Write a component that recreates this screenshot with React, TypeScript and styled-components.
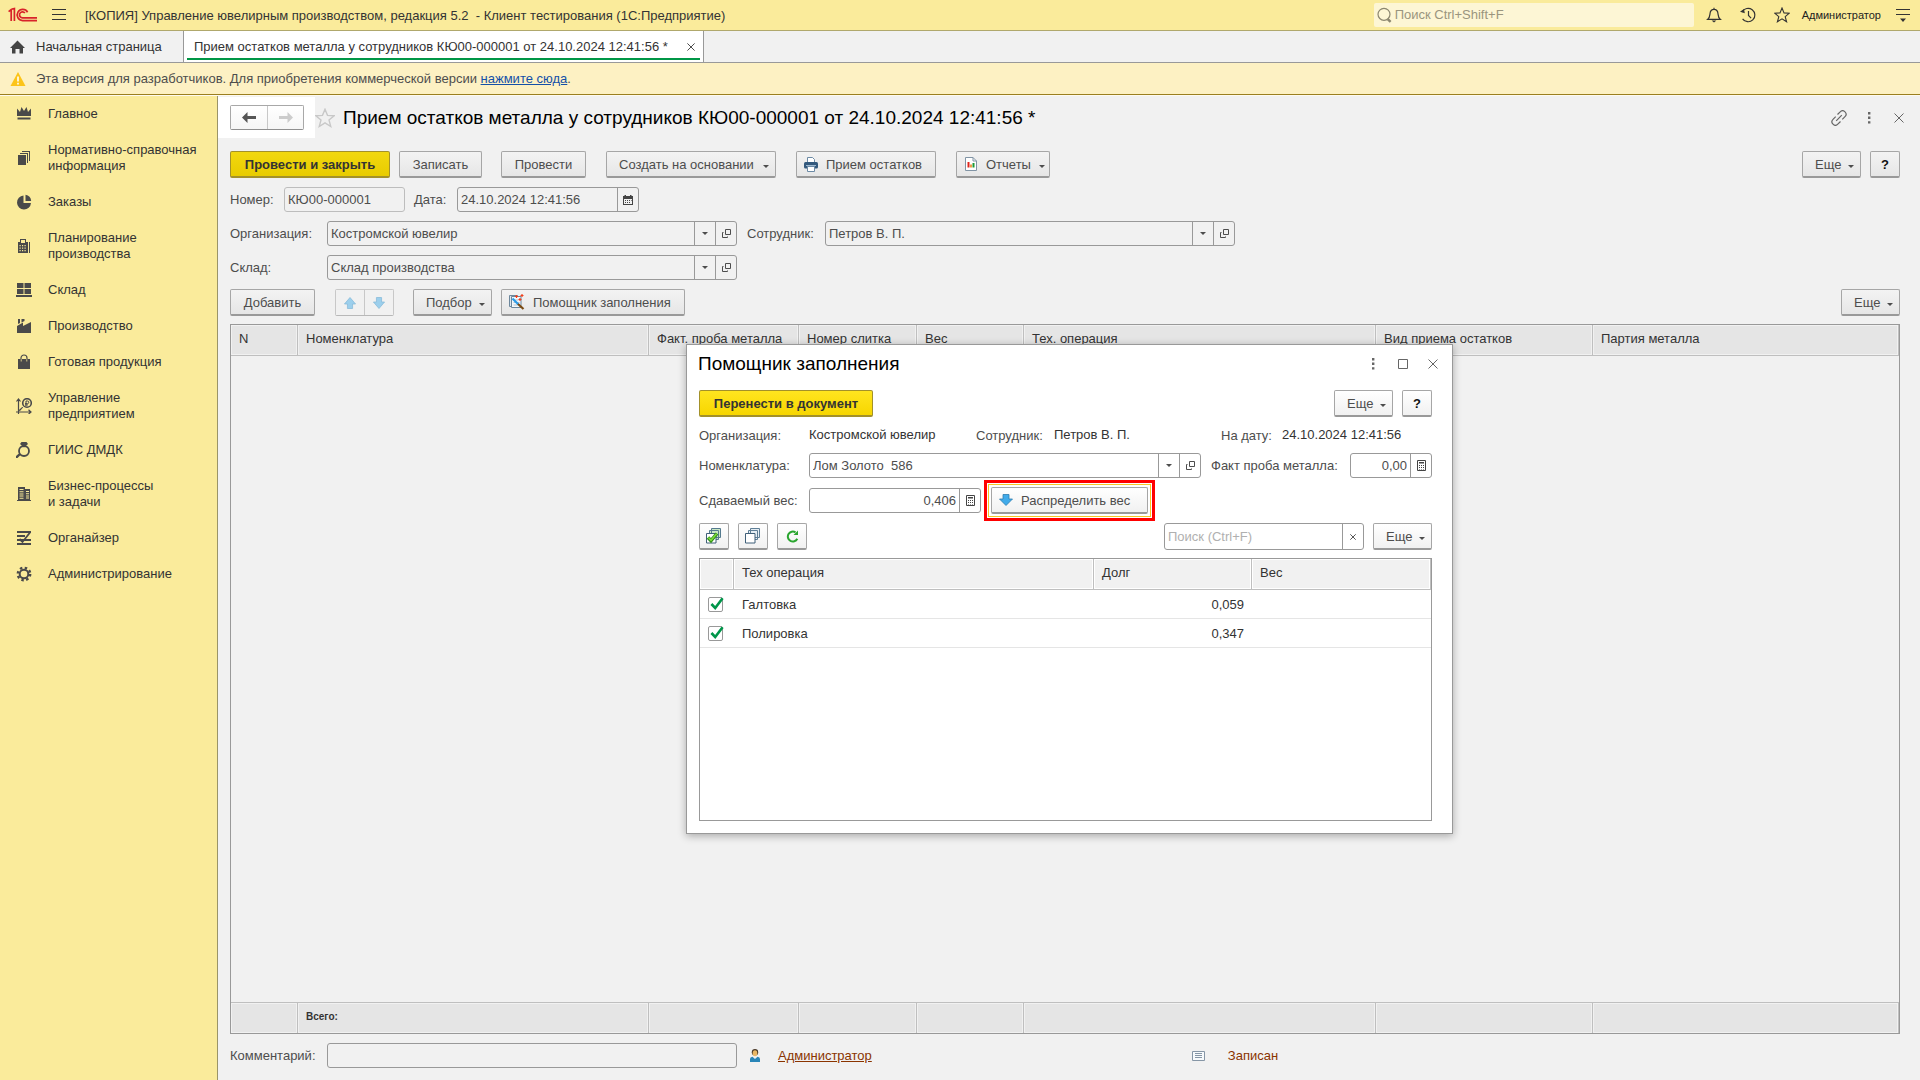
import React from "react";
import styled, { createGlobalStyle, css } from "styled-components";

const GlobalStyle = createGlobalStyle`
  * { box-sizing: border-box; }
  html, body { margin: 0; padding: 0; }
  body, button, input { font-family: "Liberation Sans", Arial, sans-serif; font-size: 13px; }
  body { color: #4d4d4d; background: #f1f1f1; }
  svg { display: block; flex: none; }
`;

/* ---------- Shell ---------- */

const Page = styled.div`
  min-height: 100vh;
  display: flex;
  flex-direction: column;
  overflow: hidden;
`;

const TopBar = styled.header`
  height: 31px;
  display: flex;
  align-items: center;
  background: #faeb9b;
  border-bottom: 1px solid #b0a86c;
  padding: 0 5px 0 8px;
  color: #333;
`;

const MenuButton = styled.button`
  width: 24px;
  height: 24px;
  margin-left: 10px;
  padding: 0;
  border: 0;
  background: none;
  display: flex;
  align-items: center;
  justify-content: center;
  color: #333;
`;

const AppTitle = styled.h1`
  margin: 0 auto 0 14px;
  font-size: 13px;
  font-weight: 400;
  white-space: pre;
`;

const GlobalSearch = styled.label`
  width: 320px;
  height: 24px;
  display: flex;
  align-items: center;
  gap: 3px;
  padding-left: 3px;
  border-radius: 2px;
  background: #fdf6d5;
  color: #8c8770;
`;

const GlobalSearchInput = styled.input`
  flex: 1;
  min-width: 0;
  padding: 0 0 1px;
  border: 0;
  outline: 0;
  background: none;
  &::placeholder { color: #9a957e; opacity: 1; }
`;

const TopIcons = styled.div`
  display: flex;
  align-items: center;
  gap: 10px;
  margin: 0 8px;
`;

const TopIconButton = styled(MenuButton)`
  margin: 0;
`;

const UserButton = styled.button`
  padding: 0;
  border: 0;
  background: none;
  font-size: 11px;
  color: #222;
`;

const TabBar = styled.nav`
  height: 32px;
  display: flex;
  background: #f1f1f1;
  border-bottom: 1px solid #999;
  color: #333;
`;

const HomeTab = styled.a`
  width: 184px;
  display: flex;
  align-items: center;
  gap: 11px;
  padding-left: 10px;
  border-right: 1px solid #999;
  color: #333;
  text-decoration: none;
`;

const OpenTab = styled.div`
  min-width: 520px;
  display: flex;
  align-items: center;
  justify-content: space-between;
  gap: 6px;
  padding: 0 6px 0 10px;
  background: #fff;
  border-right: 1px solid #999;
  box-shadow: inset 0 -2px 0 #fff, inset 3px 0 0 #fff, inset -3px 0 0 #fff, inset 0 -4px 0 #009646;
`;

const TabClose = styled.button`
  width: 12px;
  height: 16px;
  padding: 0;
  border: 0;
  background: none;
  display: flex;
  align-items: center;
  justify-content: center;
  color: #444;
`;

const Notice = styled.div`
  height: 32px;
  display: flex;
  align-items: center;
  gap: 10px;
  padding-left: 10px;
  background: #fdf1c3;
  border-bottom: 1px solid #9b7f1f;
  color: #4d4d4d;
  a { color: #1450a8; }
`;

const Body = styled.div`
  flex: 1;
  display: flex;
  border-top: 1px solid #fdfaf0;
`;

const Sidebar = styled.nav`
  width: 218px;
  flex: none;
  background: #faeb9b;
  border-right: 1px solid #9a9468;
`;

const SideLink = styled.a`
  display: flex;
  align-items: center;
  gap: 16px;
  padding: 10px 8px 10px 16px;
  line-height: 16px;
  color: #333;
  text-decoration: none;
  white-space: pre-line;
  svg { color: #4a4a4a; }
`;

const Main = styled.main`
  position: relative;
  flex: 1;
  min-width: 0;
  display: flex;
  flex-direction: column;
`;

const FormHeader = styled.div`
  display: flex;
  align-items: center;
  height: 41px;
  margin-top: 1px;
  padding-right: 6px;
`;

const NavCorner = styled.div`
  height: 41px;
  padding: 8px 11px 8px 12px;
  background: #fff;
`;

const Segmented = styled.div<{ $muted?: boolean }>`
  display: flex;
  border: 1px solid ${(p) => (p.$muted ? "#c8c8c8" : "#a8a8a8")};
  border-bottom-color: ${(p) => (p.$muted ? "#b8b8b8" : "#8f8f8f")};
  border-radius: 2px;
`;

const SegmentButton = styled.button<{ $w: number; $h: number; $plain?: boolean }>`
  width: ${(p) => p.$w}px;
  height: ${(p) => p.$h}px;
  padding: 0;
  border: 0;
  background: ${(p) => (p.$plain ? "#f1f1f1" : "linear-gradient(#fff, #f6f6f6)")};
  display: flex;
  align-items: center;
  justify-content: center;
  & + & { border-left: 1px solid ${(p) => (p.$plain ? "#c8c8c8" : "#a8a8a8")}; }
`;

const FormTitle = styled.h2`
  margin: 0 auto 0 8px;
  font-size: 19px;
  font-weight: 400;
  color: #000;
`;

const WindowButton = styled.button`
  width: 30px;
  height: 30px;
  padding: 0;
  border: 0;
  background: none;
  display: flex;
  align-items: center;
  justify-content: center;
  color: #666;
`;

const FormBody = styled.div`
  flex: 1;
  display: flex;
  flex-direction: column;
  padding: 13px 20px 12px 12px;
`;

const Fields = styled.div`
  display: flex;
  flex-direction: column;
  gap: 9px;
  margin-bottom: 8px;
`;

const Row = styled.div`
  display: flex;
  align-items: center;
`;

const CommentRow = styled(Row)`
  margin-top: 9px;
`;

const Spacer = styled.div`
  flex: 1;
`;

const Gap = styled.div<{ $w: number }>`
  width: ${(p) => p.$w}px;
  flex: none;
`;

const Caret = styled.span`
  width: 0;
  height: 0;
  margin-top: 4px;
  border: 3px solid transparent;
  border-top-color: #4d4d4d;
  border-bottom: 0;
`;

const Button = styled.button<{ $w?: number; $primary?: boolean; $light?: boolean; $icon?: boolean; $menu?: boolean }>`
  width: ${(p) => p.$w}px;
  height: 27px;
  flex: none;
  display: flex;
  align-items: center;
  justify-content: center;
  padding: 0;
  border: 1px solid #a6a6a6;
  border-bottom: 2px solid #999;
  border-radius: 2px;
  background: ${(p) => (p.$light ? "linear-gradient(#fff, #f1f1f1)" : "linear-gradient(#f3f3f3, #e6e6e6)")};
  color: #4d4d4d;
  white-space: nowrap;
  ${(p) =>
    p.$menu &&
    css`
      justify-content: flex-start;
      padding: 0 6px 0 12px;
      ${Caret} { margin-left: auto; }
    `}
  ${(p) =>
    p.$icon &&
    css`
      justify-content: flex-start;
      padding-left: 7px;
      gap: 8px;
    `}
  ${(p) =>
    p.$primary &&
    css`
      font-weight: 700;
      color: #333;
      border-color: #a3912a;
      background: ${p.$light ? "linear-gradient(#ffe51f, #f7d600)" : "linear-gradient(#f2d80f, #e8cc00)"};
    `}
`;

const HelpButton = styled(Button)`
  font-weight: 700;
  color: #111;
`;

const Label = styled.label<{ $w?: number }>`
  width: ${(p) => p.$w}px;
  flex: none;
  white-space: nowrap;
`;

const FieldBox = styled.div<{ $w: number; $light?: boolean; $readonly?: boolean; $h?: number }>`
  width: ${(p) => p.$w}px;
  height: ${(p) => p.$h ?? 25}px;
  flex: none;
  display: flex;
  border: 1px solid ${(p) => (p.$readonly ? "#bdbdbd" : "#999")};
  border-radius: 3px;
  background: ${(p) => (p.$light ? "#fff" : "#f1f1f1")};
`;

const FieldInput = styled.input<{ $right?: boolean }>`
  flex: 1;
  min-width: 0;
  padding: 0 3px;
  border: 0;
  outline: 0;
  background: none;
  color: #4d4d4d;
  text-align: ${(p) => (p.$right ? "right" : "left")};
  &::placeholder { color: #b0b0b0; opacity: 1; }
`;

const FieldButton = styled.button`
  width: 21px;
  padding: 0;
  border: 0;
  border-left: 1px solid #999;
  background: none;
  display: flex;
  align-items: center;
  justify-content: center;
  color: #4d4d4d;
`;

const FieldCaret = styled(Caret)`
  margin-top: 0;
`;

/* ---------- Tables ---------- */

const TableFrame = styled.div`
  flex: 1;
  display: flex;
  border: 1px solid #999;
`;

const DialogTableFrame = styled(TableFrame)`
  align-items: flex-start;
`;

const Grid = styled.table<{ $light?: boolean }>`
  width: 100%;
  table-layout: fixed;
  border-collapse: separate;
  border-spacing: 0;
  color: #333;
  th, td { padding: 0 8px; text-align: left; font-weight: 400; white-space: nowrap; overflow: hidden; }
  thead th, tfoot td {
    height: 31px;
    padding-bottom: 3px;
    background: ${(p) => (p.$light ? "#f1f1f1" : "#e5e5e5")};
    box-shadow: inset 0 0 0 1px ${(p) => (p.$light ? "#fff" : "#f1f1f1")};
    border-right: 1px solid #bfbfbf;
  }
  thead th { border-bottom: 1px solid #bfbfbf; }
  tfoot td { border-top: 1px solid #bfbfbf; font-size: 10px; font-weight: 700; }
`;

const DataCell = styled.td<{ $right?: boolean }>`
  height: 29px;
  border-bottom: 1px solid #e5e5e5;
  && { text-align: ${(p) => (p.$right ? "right" : "left")}; }
`;

const CheckLabel = styled.label`
  display: block;
  width: 17px;
  height: 17px;
  position: relative;
  svg { position: absolute; left: 1px; top: 0; }
`;

const CheckInput = styled.input`
  appearance: none;
  display: block;
  width: 15px;
  height: 15px;
  margin: 2px 0 0;
  border: 1px solid #999;
  border-radius: 2px;
  background: #fff;
`;

const FooterLink = styled.a`
  color: #8a3400;
`;

const StatusText = styled.span`
  color: #8a3400;
`;

/* ---------- Dialog ---------- */

const Dialog = styled.section`
  position: absolute;
  left: 468px;
  top: 248px;
  width: 767px;
  height: 490px;
  display: flex;
  flex-direction: column;
  padding: 0 20px 12px 12px;
  background: #fff;
  border: 1px solid #999;
  box-shadow: 0 2px 8px rgba(0, 0, 0, 0.3);
`;

const DialogHeader = styled.div`
  display: flex;
  align-items: center;
  height: 38px;
  margin: 0 -16px 7px 0;
`;

const DialogTitle = styled(FormTitle)`
  margin-left: -1px;
`;

const DialogRows = styled.div`
  display: flex;
  flex-direction: column;
  gap: 9px;
  margin-bottom: 10px;
`;

const StaticValue = styled.output<{ $w?: number }>`
  width: ${(p) => p.$w}px;
  color: #333;
  line-height: 18px;
`;

const Highlight = styled.div`
  position: relative;
  margin: -1px 0 -1px 10px;
  &::before {
    content: "";
    position: absolute;
    inset: -7px;
    border: 3px solid #f00;
    pointer-events: none;
  }
  &::after {
    content: "";
    position: absolute;
    inset: -3px;
    border: 1px solid #f5c827;
    pointer-events: none;
  }
`;

/* ---------- Icons ---------- */

const Logo = () => (
  <svg width="29" height="16" viewBox="0 0 29 16" fill="none" stroke="#d8232a" strokeWidth="1.7">
    <path d="M.6 4.600 4 2M3.200 3v11M6.400 14V1.600L4 2" />
    <path d="M19.600 5.200A5.600 5.600 0 1 0 14.600 13.600H29" />
    <path d="M16.900 6A3 3 0 1 0 14.600 10.800H29" />
  </svg>
);
const Burger = () => (
  <svg width="16" height="12" viewBox="0 0 16 12" fill="currentColor">
    <path d="M1 0h14v1H1zM1 5h14v1H1zM1 10h14v1H1z" />
  </svg>
);
const SearchIcon = () => (
  <svg width="15" height="16" viewBox="0 0 15 16" fill="none" stroke="currentColor" strokeWidth="1.2">
    <circle cx="7" cy="7.3" r="6" />
    <path d="m10.6 12 3 2.8" strokeWidth="2.4" />
  </svg>
);
const Bell = () => (
  <svg width="16" height="16" viewBox="0 0 16 16" fill="none" stroke="currentColor" strokeWidth="1.2">
    <path d="M1.6 12.4c2.2-1.8 2.2-3 2.4-5.600C4.200 4 5.600 2.400 8 2.400S11.800 4 12 6.800c.2 2.600.2 3.800 2.400 5.600zM8 2.400V.8" />
    <path d="M5.600 13.600h4.800L8 15.600z" fill="currentColor" stroke="none" />
  </svg>
);
const History = () => (
  <svg width="16" height="16" viewBox="0 0 16 16" fill="none" stroke="currentColor" strokeWidth="1.2">
    <path d="M2.200 5A6.700 6.700 0 1 1 2.600 11.800M8.500 4v4.500l2.600 2.600" />
    <path d="M0 4.800 4.800 6.200 4 2z" fill="currentColor" stroke="none" />
  </svg>
);
const Star = ({ size = 16, color = "currentColor" }: { size?: number; color?: string }) => (
  <svg width={size} height={size} viewBox="0 0 16 16" fill="none" stroke={color} strokeWidth="1.1">
    <path d="m8 1 2 4.900 5.300.3-4.100 3.400 1.400 5.200L8 11.900l-4.600 2.900 1.400-5.200L.7 6.200 6 5.900z" />
  </svg>
);
const PanelMenu = () => (
  <svg width="14" height="14" viewBox="0 0 14 14" fill="currentColor">
    <path d="M0 1h14v1H0zM0 6h14v1H0zM4 10.500h6L7 14z" />
  </svg>
);
const Home = () => (
  <svg width="15" height="14" viewBox="0 0 15 14" fill="#444">
    <path d="M7.500.5 15 8h-2v5.500H9.500V9h-4v4.500H2V8H0z" />
  </svg>
);
const Cross = ({ size = 8, w = 1.2 }: { size?: number; w?: number }) => (
  <svg width={size} height={size} viewBox="0 0 10 10" stroke="currentColor" strokeWidth={w}>
    <path d="m.5.5 9 9m0-9-9 9" />
  </svg>
);
const Warning = () => (
  <svg width="16" height="14" viewBox="0 0 16 14">
    <path d="M8 0 15.500 14H.5z" fill="#fcc419" />
    <path d="M7.200 4.500h1.600v5H7.200zM7.200 10.800h1.600v1.600H7.200z" fill="#fff" />
  </svg>
);
const Arrow = ({ color, flip }: { color: string; flip?: boolean }) => (
  <svg width="14" height="11" viewBox="0 0 14 11" fill={color}>
    <path d={flip ? "M14 5.500 8.500 0v4H0v3h8.500v4z" : "M0 5.500 5.500 0v4H14v3H5.500v4z"} />
  </svg>
);
const LinkIcon = () => (
  <svg width="16" height="16" viewBox="0 0 16 16" fill="none" stroke="currentColor" strokeWidth="1.2">
    <path d="m6.500 4.500 2.700-2.700a3.200 3.200 0 0 1 4.800 4.800L11.300 9.300M9.500 11.500l-2.700 2.700A3.200 3.200 0 0 1 2 9.400l2.700-2.700M5.200 10.800l5.600-5.600" />
  </svg>
);
const Dots = () => (
  <svg width="4" height="12" viewBox="0 0 4 12" fill="currentColor">
    <path d="M1 0h2.400v2.400H1zM1 4.600h2.400V7H1zM1 9.200h2.400v2.400H1z" />
  </svg>
);
const Square = () => (
  <svg width="10" height="10" viewBox="0 0 10 10" fill="none" stroke="currentColor">
    <path d="M.5.5h9v9h-9z" />
  </svg>
);
const OpenIcon = () => (
  <svg width="9" height="9" viewBox="0 0 9 9" fill="none" stroke="currentColor">
    <path d="M3.500.5h5v5h-5zM1.500 3.500h-1v5h5v-1" />
  </svg>
);
const Calendar = () => (
  <svg width="10" height="10" viewBox="0 0 10 10">
    <path d="M0 1h1.500V0h1.500v1h4V0h1.500v1H10v9H0z" fill="#444" />
    <path d="M1 4h8v5H1z" fill="#f1f1f1" />
    <path d="M2 5h1v1H2zM4 5h1v1H4zM6 5h1v1H6zM2 7h1v1H2zM4 7h1v1H4zM6 7h1v1H6zM8 5h.6v1H8z" fill="#444" />
  </svg>
);
const Calculator = () => (
  <svg width="9" height="11" viewBox="0 0 9 11">
    <path d="M.5.5h8v10h-8z" fill="none" stroke="#444" />
    <path d="M2 2h5v1.500H2zM2 5h1v1H2zM4 5h1v1H4zM6 5h1v1H6zM2 7h1v1H2zM4 7h1v1H4zM6 7h1v1H6zM2 9h1v.6H2zM4 9h1v.6H4zM6 9h1v.6H6z" fill="#444" />
  </svg>
);
const BlueArrow = ({ down, pale, wide }: { down?: boolean; pale?: boolean; wide?: boolean }) => (
  <svg
    width={wide ? 14 : 12}
    height="12"
    viewBox="0 0 14 12"
    preserveAspectRatio="none"
    fill={pale ? "#9ccfec" : "#41abea"}
    stroke={pale ? "#86b9d8" : "#2f7eb0"}
    strokeWidth=".8"
  >
    <path d={down ? "M4 .5h6V5h3.500L7 11.500.5 5H4z" : "M4 11.500h6V7h3.500L7 .5.5 7H4z"} />
  </svg>
);
const Printer = () => (
  <svg width="14" height="15" viewBox="0 0 14 15">
    <path d="M3.500.5h5l2 2v4h-7z" fill="#fff" stroke="#6c8aa5" />
    <rect x="0" y="5" width="14" height="6.500" rx="1.500" fill="#33597d" />
    <path d="M2 8h10v1H2z" fill="#9fb9d0" />
    <path d="M3.500 9.500h7v5h-7z" fill="#fff" stroke="#6c8aa5" />
  </svg>
);
const Report = () => (
  <svg width="14" height="14" viewBox="-1 0 14 14">
    <path d="M.5.5h7.500l3.500 3.500v9.500H.5z" fill="#fff" stroke="#8194a5" />
    <path d="M8 .5V4h3.500" fill="none" stroke="#8194a5" />
    <path d="M2.500 5h2v5.500h-2z" fill="#e0261c" />
    <path d="M5.200 7.500h1.600v3H5.200z" fill="#e8801c" />
    <path d="M7.500 6h2v4.500h-2z" fill="#1d9a35" />
  </svg>
);
const Wizard = () => (
  <svg width="16" height="16" viewBox="0 0 16 16">
    <path d="M.5 1.500h8v11h-8z" fill="#dfe8ef" stroke="#6d879c" />
    <path d="M2.500 2.500h9.500v11H2.500z" fill="#f4f8fb" stroke="#6d879c" />
    <path d="M4.500 6h5M4.500 8.500h6M4.500 11h4" stroke="#b3c3d0" />
    <path d="m3.500 4.500 6 6" stroke="#2b9be8" strokeWidth="2.200" />
    <path d="m9 10 5.500 5" stroke="#7a4a12" strokeWidth="2.200" />
    <path d="M7.500 1v3M6 2.500h3M13 0v3M11.500 1.500h3M11 4v3M9.500 5.500h3" stroke="#f0401c" strokeWidth="1.200" />
  </svg>
);
const CheckAll = () => (
  <svg width="16" height="16" viewBox="0 0 16 16">
    <path d="M5.500.5h9v9h-9zM3.500 2.500h9v9h-9z" fill="#c9e7c4" stroke="#547a8f" />
    <path d="M.5 5.500h9.500v9.500H.5z" fill="#fff" stroke="#3f5f78" />
    <path d="m2 9.500 3 3.200 6-7.200" fill="none" stroke="#2f8f18" strokeWidth="3.400" />
    <path d="m2.400 9.500 2.600 2.800 5.600-6.600" fill="none" stroke="#7ddc3c" strokeWidth="1.600" />
  </svg>
);
const UncheckAll = () => (
  <svg width="16" height="16" viewBox="0 0 16 16" fill="#e6eef4" stroke="#5f7f97">
    <path d="M5.500.5h9v9h-9zM3.500 2.500h9v9h-9z" />
    <path d="M.5 5.500h9.500v9.500H.5z" fill="#fff" stroke="#3f5f78" />
  </svg>
);
const Refresh = () => (
  <svg width="13" height="13" viewBox="0 0 13 13" fill="none" stroke="#2aa52f" strokeWidth="2">
    <path d="M9.500 2.300A5 5 0 1 0 11.300 8.800" />
    <path d="M12 .5V5H7.500z" fill="#2aa52f" stroke="none" />
  </svg>
);
const Check = () => (
  <svg width="15" height="14" viewBox="0 0 15 14" fill="none" stroke="#00964a" strokeWidth="2.600">
    <path d="m2.400 7 3.800 4 7.400-9.800" />
  </svg>
);
const Person = () => (
  <svg width="10" height="13" viewBox="0 0 10 13">
    <circle cx="5" cy="3.200" r="3.200" fill="#4b3a28" />
    <ellipse cx="5" cy="4.200" rx="2.300" ry="3" fill="#eab765" />
    <path d="M0 13V10q0-2 2.500-2.200L5 10l2.500-2.200Q10 8 10 10v3z" fill="#2a86b8" />
  </svg>
);
const Doc = () => (
  <svg width="13" height="10" viewBox="0 0 13 10" fill="none" stroke="#8696a6">
    <path d="M.5.500h12v9H.5z" fill="#f7fafc" />
    <path d="M3 2.500h7M3 4.500h7M3 6.500h7" />
  </svg>
);

const sideIcons: Record<string, React.ReactNode> = {
  crown: <path d="M1 2.500 4 6l1.500-5L8 5l2.500-4L12 6l3-3.500V10H1zM1.500 11.500h13V13.500h-13z" />,
  books: <path d="M2 5h8v10H2zM4 3h8v10h-1V4H4zM6 1h8v10h-1V2H6z" />,
  pie: <path d="M7.500 1.500V9H15A7 7 0 1 1 7.500 1.500zM9.500.8A7 7 0 0 1 15.200 7H9.500z" />,
  calc: (
    <path
      fillRule="evenodd"
      d="M4 1h6v3h2v11H2V4h2zM5 2v3h4V2zM3.500 7v1.200h1.200V7zm2.500 0v1.200h1.200V7zm2.500 0v1.200h1.200V7zM3.500 9.500v1.200h1.200V9.500zm2.500 0v1.200h1.200V9.500zm2.500 0v1.200h1.200V9.500zM3.500 12v1.200h1.200V12zM6 12v1.200h1.200V12zm2.500 0v1.200h1.200V12zM13 4h1v11h-1z"
    />
  ),
  store: <path d="M1 1h6.500v5H1zM8.500 1H15v5H8.500zM1 7h6.500v5H1zM8.500 7H15v5H8.500zM0 13h16v2H0z" />,
  factory: <path d="M2 1h2v4l-2 1zM5.500 1h3v2l-3 1.500zM1 8l6-3.500V8l8-4v11H1z" />,
  bag: (
    <g>
      <path d="M2 5h12v10H2z" />
      <path d="M5 8V4a3 3 0 0 1 6 0v4" fill="none" stroke="currentColor" strokeWidth="1.200" />
      <path d="M5.200 5.200v2.300M10.800 5.200v2.300" stroke="#faeb9b" strokeWidth=".8" />
    </g>
  ),
  enterprise: (
    <g fill="none" stroke="currentColor" strokeWidth="1.200">
      <path d="M2.500 16V1.500M0 14h15M.5 3.500l2-2.500 2 2.500M12.500 11.800 15 14l-2.500 2.200M2.500 12.500c3 0 2-3 4.500-3" />
      <circle cx="11" cy="5" r="4.300" strokeWidth="1.600" />
      <path d="M10 8V3h1.500a1.200 1.200 0 0 1 0 2.600H9M9 6.900h3" strokeWidth="1" />
    </g>
  ),
  ring: (
    <g>
      <circle cx="8" cy="9" r="5" fill="none" stroke="currentColor" strokeWidth="1.800" />
      <path d="M5.500 0h5L12 2 8 5.500 4 2zM0 14l3.500-3 1.500 1.500L1.500 16H0z" />
    </g>
  ),
  buildings: (
    <path
      fillRule="evenodd"
      d="M2 1h7v2h5v11h1v1H1v-1h1zM3.500 3v1h4V3zm0 2.200v1h4v-1zm0 2.200v1h4v-1zm0 2.200v1h4v-1zm0 2.200v1h4v-1zM10 5v1h3V5zm0 2.200v1h3v-1zm0 2.200v1h3v-1zm0 2.200v1h3v-1z"
    />
  ),
  organizer: (
    <g>
      <path d="M1 1h14v2H1zM1 5h8v2H1zM1 9h14v2H1zM1 13h14v2H1z" />
      <path d="m3.500 9 3 3L14 2.500" fill="none" stroke="#4a4a4a" strokeWidth="1.800" />
    </g>
  ),
  gear: (
    <g fill="none" stroke="currentColor">
      <circle cx="8" cy="8" r="4.300" strokeWidth="2" />
      <circle cx="8" cy="8" r="6.200" strokeWidth="2.400" strokeDasharray="2.435 2.435" />
    </g>
  ),
};

const sections: [string, string][] = [
  ["crown", "Главное"],
  ["books", "Нормативно-справочная\nинформация"],
  ["pie", "Заказы"],
  ["calc", "Планирование\nпроизводства"],
  ["store", "Склад"],
  ["factory", "Производство"],
  ["bag", "Готовая продукция"],
  ["enterprise", "Управление\nпредприятием"],
  ["ring", "ГИИС ДМДК"],
  ["buildings", "Бизнес-процессы\nи задачи"],
  ["organizer", "Органайзер"],
  ["gear", "Администрирование"],
];

const columns: [string, number | undefined][] = [
  ["N", 67],
  ["Номенклатура", 351],
  ["Факт. проба металла", 150],
  ["Номер слитка", 118],
  ["Вес", 107],
  ["Тех. операция", 352],
  ["Вид приема остатков", 217],
  ["Партия металла", undefined],
];

const operations = [
  { name: "Галтовка", debt: "0,059" },
  { name: "Полировка", debt: "0,347" },
];

const MoreButton = ({ light }: { light?: boolean }) => (
  <Button $w={59} $light={light} $menu>
    Еще <Caret />
  </Button>
);

type FieldProps = {
  id: string;
  value: string;
  width: number;
  light?: boolean;
  readOnly?: boolean;
  right?: boolean;
  kind?: "ref" | "date" | "calc";
};

const Field = ({ id, value, width, light, readOnly, right, kind }: FieldProps) => (
  <FieldBox $w={width} $light={light} $readonly={readOnly}>
    <FieldInput id={id} defaultValue={value} readOnly={readOnly} $right={right} />
    {kind === "ref" && (
      <>
        <FieldButton aria-label="Выбрать из списка"><FieldCaret /></FieldButton>
        <FieldButton aria-label="Открыть"><OpenIcon /></FieldButton>
      </>
    )}
    {kind === "date" && <FieldButton aria-label="Календарь"><Calendar /></FieldButton>}
    {kind === "calc" && <FieldButton aria-label="Калькулятор"><Calculator /></FieldButton>}
  </FieldBox>
);

const FillAssistant = () => (
  <Dialog role="dialog" aria-label="Помощник заполнения">
    <DialogHeader>
      <DialogTitle>Помощник заполнения</DialogTitle>
      <WindowButton aria-label="Меню"><Dots /></WindowButton>
      <WindowButton aria-label="Развернуть"><Square /></WindowButton>
      <WindowButton aria-label="Закрыть"><Cross size={10} w={1} /></WindowButton>
    </DialogHeader>
    <DialogRows>
      <Row>
        <Button $w={174} $primary $light>Перенести в документ</Button>
        <Spacer />
        <MoreButton light />
        <Gap $w={9} />
        <HelpButton $w={30} $light>?</HelpButton>
      </Row>
      <Row>
        <Label $w={110} htmlFor="d-org">Организация:</Label>
        <StaticValue $w={167} id="d-org">Костромской ювелир</StaticValue>
        <Label $w={78} htmlFor="d-emp">Сотрудник:</Label>
        <StaticValue $w={167} id="d-emp">Петров В. П.</StaticValue>
        <Label $w={61} htmlFor="d-date">На дату:</Label>
        <StaticValue id="d-date">24.10.2024 12:41:56</StaticValue>
      </Row>
      <Row>
        <Label $w={110} htmlFor="d-item">Номенклатура:</Label>
        <Field id="d-item" value="Лом Золото  586" width={392} light kind="ref" />
        <Spacer />
        <Label $w={139} htmlFor="d-probe">Факт проба металла:</Label>
        <Field id="d-probe" value="0,00" width={82} light right kind="calc" />
      </Row>
    </DialogRows>
    <DialogRows>
      <Row>
        <Label $w={110} htmlFor="d-weight">Сдаваемый вес:</Label>
        <Field id="d-weight" value="0,406" width={172} light right kind="calc" />
        <Highlight>
          <Button $w={157} $light $icon><BlueArrow down wide />Распределить вес</Button>
        </Highlight>
      </Row>
    </DialogRows>
    <Fields>
      <Row>
        <Button $w={30} $light aria-label="Отметить все"><CheckAll /></Button>
        <Gap $w={9} />
        <Button $w={30} $light aria-label="Снять отметки"><UncheckAll /></Button>
        <Gap $w={9} />
        <Button $w={30} $light aria-label="Обновить"><Refresh /></Button>
        <Spacer />
        <FieldBox $w={200} $h={27} $light>
          <FieldInput placeholder="Поиск (Ctrl+F)" aria-label="Поиск" />
          <FieldButton aria-label="Очистить"><Cross size={6} w={1.6} /></FieldButton>
        </FieldBox>
        <Gap $w={9} />
        <MoreButton light />
      </Row>
    </Fields>
    <DialogTableFrame>
      <Grid $light>
        <colgroup>
          <col width="34" /><col width="360" /><col width="158" /><col />
        </colgroup>
        <thead>
          <tr><th /><th>Тех операция</th><th>Долг</th><th>Вес</th></tr>
        </thead>
        <tbody>
          {operations.map((op) => (
            <tr key={op.name}>
              <DataCell>
                <CheckLabel>
                  <CheckInput type="checkbox" defaultChecked aria-label={op.name} />
                  <Check />
                </CheckLabel>
              </DataCell>
              <DataCell>{op.name}</DataCell>
              <DataCell $right>{op.debt}</DataCell>
              <DataCell />
            </tr>
          ))}
        </tbody>
      </Grid>
    </DialogTableFrame>
  </Dialog>
);

export default function App() {
  return (
    <Page>
      <GlobalStyle />
      <TopBar>
        <Logo />
        <MenuButton aria-label="Главное меню"><Burger /></MenuButton>
        <AppTitle>[КОПИЯ] Управление ювелирным производством, редакция 5.2  - Клиент тестирования (1С:Предприятие)</AppTitle>
        <GlobalSearch>
          <SearchIcon />
          <GlobalSearchInput placeholder="Поиск Ctrl+Shift+F" aria-label="Поиск" />
        </GlobalSearch>
        <TopIcons>
          <TopIconButton aria-label="Уведомления"><Bell /></TopIconButton>
          <TopIconButton aria-label="История"><History /></TopIconButton>
          <TopIconButton aria-label="Избранное"><Star /></TopIconButton>
        </TopIcons>
        <UserButton>Администратор</UserButton>
        <MenuButton aria-label="Панель"><PanelMenu /></MenuButton>
      </TopBar>
      <TabBar>
        <HomeTab href="#home"><Home />Начальная страница</HomeTab>
        <OpenTab>
          Прием остатков металла у сотрудников КЮ00-000001 от 24.10.2024 12:41:56 *
          <TabClose aria-label="Закрыть вкладку"><Cross /></TabClose>
        </OpenTab>
      </TabBar>
      <Notice>
        <Warning />
        <span>Эта версия для разработчиков. Для приобретения коммерческой версии <a href="#buy">нажмите сюда</a>.</span>
      </Notice>
      <Body>
        <Sidebar>
          {sections.map(([icon, title]) => (
            <SideLink key={icon} href={`#${icon}`}>
              <svg width="16" height="16" viewBox="0 0 16 16" fill="currentColor">{sideIcons[icon]}</svg>
              {title}
            </SideLink>
          ))}
        </Sidebar>
        <Main>
          <FormHeader>
            <NavCorner>
              <Segmented>
                <SegmentButton $w={36} $h={23} aria-label="Назад"><Arrow color="#555" /></SegmentButton>
                <SegmentButton $w={36} $h={23} aria-label="Вперед"><Arrow color="#ccc" flip /></SegmentButton>
              </Segmented>
            </NavCorner>
            <Star size={20} color="#c8c8c8" />
            <FormTitle>Прием остатков металла у сотрудников КЮ00-000001 от 24.10.2024 12:41:56 *</FormTitle>
            <WindowButton aria-label="Ссылка"><LinkIcon /></WindowButton>
            <WindowButton aria-label="Меню"><Dots /></WindowButton>
            <WindowButton aria-label="Закрыть"><Cross size={10} w={1} /></WindowButton>
          </FormHeader>
          <FormBody>
            <Fields>
              <Row>
                <Button $w={160} $primary>Провести и закрыть</Button>
                <Gap $w={9} />
                <Button $w={83}>Записать</Button>
                <Gap $w={19} />
                <Button $w={85}>Провести</Button>
                <Gap $w={20} />
                <Button $w={170} $menu>Создать на основании <Caret /></Button>
                <Gap $w={20} />
                <Button $w={140} $icon><Printer />Прием остатков</Button>
                <Gap $w={20} />
                <Button $w={94} $menu $icon><Report />Отчеты <Caret /></Button>
                <Spacer />
                <MoreButton />
                <Gap $w={9} />
                <HelpButton $w={30}>?</HelpButton>
              </Row>
              <Row>
                <Label $w={54} htmlFor="number">Номер:</Label>
                <Field id="number" value="КЮ00-000001" width={121} readOnly />
                <Gap $w={9} />
                <Label $w={43} htmlFor="date">Дата:</Label>
                <Field id="date" value="24.10.2024 12:41:56" width={182} kind="date" />
              </Row>
              <Row>
                <Label $w={97} htmlFor="org">Организация:</Label>
                <Field id="org" value="Костромской ювелир" width={410} kind="ref" />
                <Gap $w={10} />
                <Label $w={78} htmlFor="employee">Сотрудник:</Label>
                <Field id="employee" value="Петров В. П." width={410} kind="ref" />
              </Row>
              <Row>
                <Label $w={97} htmlFor="store">Склад:</Label>
                <Field id="store" value="Склад производства" width={410} kind="ref" />
              </Row>
              <Row>
                <Button $w={85}>Добавить</Button>
                <Gap $w={20} />
                <Segmented $muted>
                  <SegmentButton $w={28} $h={25} $plain aria-label="Вверх"><BlueArrow pale /></SegmentButton>
                  <SegmentButton $w={29} $h={25} $plain aria-label="Вниз"><BlueArrow pale down /></SegmentButton>
                </Segmented>
                <Gap $w={19} />
                <Button $w={79} $menu>Подбор <Caret /></Button>
                <Gap $w={9} />
                <Button $w={184} $icon><Wizard />Помощник заполнения</Button>
                <Spacer />
                <MoreButton />
              </Row>
            </Fields>
            <TableFrame>
              <Grid>
                <colgroup>
                  {columns.map(([name, width]) => <col key={name} width={width} />)}
                </colgroup>
                <thead>
                  <tr>{columns.map(([name]) => <th key={name}>{name}</th>)}</tr>
                </thead>
                <tbody>
                  <tr><td colSpan={8}>&nbsp;</td></tr>
                </tbody>
                <tfoot>
                  <tr>{columns.map(([name], i) => <td key={name}>{i === 1 ? "Всего:" : ""}</td>)}</tr>
                </tfoot>
              </Grid>
            </TableFrame>
            <CommentRow>
              <Label $w={97} htmlFor="comment">Комментарий:</Label>
              <Field id="comment" value="" width={410} />
              <Gap $w={13} />
              <Person />
              <Gap $w={18} />
              <FooterLink href="#author">Администратор</FooterLink>
              <Gap $w={320} />
              <Doc />
              <Gap $w={23} />
              <StatusText>Записан</StatusText>
            </CommentRow>
          </FormBody>
          <FillAssistant />
        </Main>
      </Body>
    </Page>
  );
}
